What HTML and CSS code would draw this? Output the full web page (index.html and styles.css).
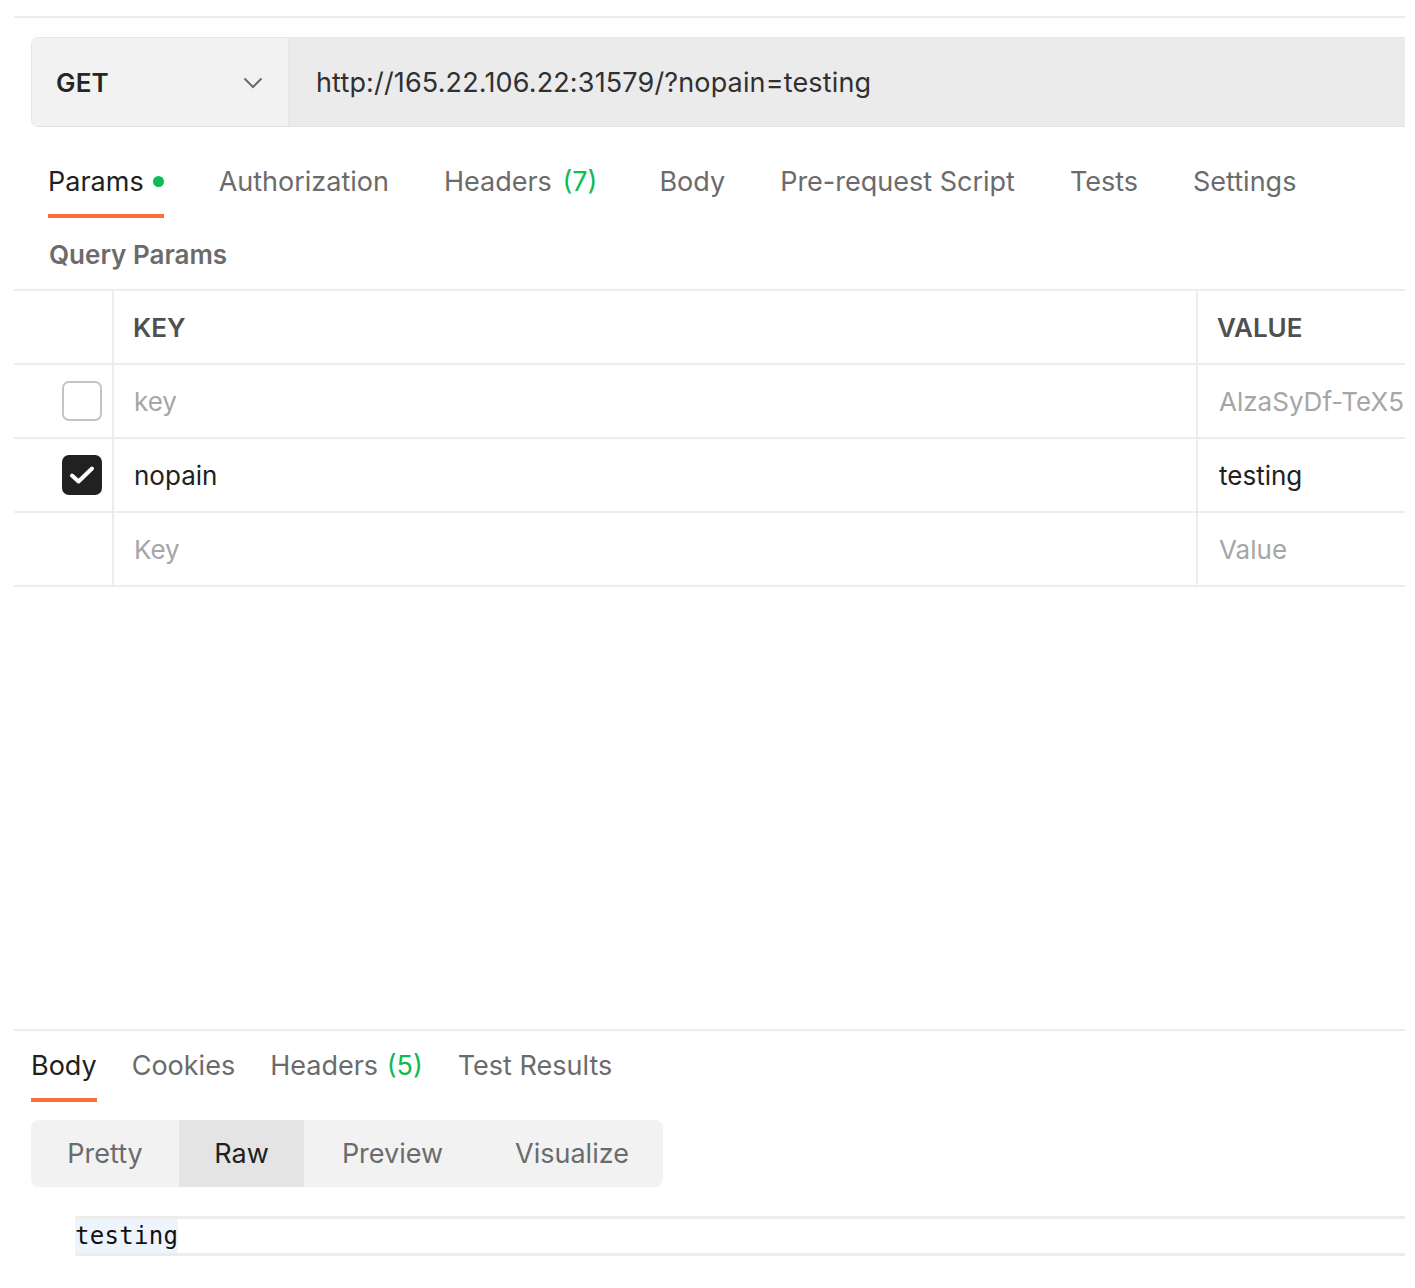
FILE: index.html
```html
<!DOCTYPE html>
<html>
<head>
<meta charset="utf-8">
<link rel="stylesheet" href="styles.css">
</head>
<body>
<div class="page">
  <div class="topline"></div>
  <div class="request">
    <div class="method">
      <span class="method-name">GET</span>
      <svg class="chev" width="20" height="12" viewBox="0 0 20 12"><path d="M1.5 1.5 L10 10 L18.5 1.5" fill="none" stroke="#6b6b6b" stroke-width="2"/></svg>
    </div>
    <div class="url">http://165.22.106.22:31579/?nopain=testing</div>
  </div>

  <div class="tabs req-tabs">
    <div class="tab active">Params<span class="dot"></span></div>
    <div class="tab">Authorization</div>
    <div class="tab wide">Headers <span class="count">(7)</span></div>
    <div class="tab">Body</div>
    <div class="tab">Pre-request Script</div>
    <div class="tab">Tests</div>
    <div class="tab">Settings</div>
  </div>

  <div class="section-title">Query Params</div>

  <div class="table">
    <div class="row head">
      <div class="c-check"></div>
      <div class="c-key">KEY</div>
      <div class="c-val">VALUE</div>
    </div>
    <div class="row">
      <div class="c-check"><span class="box"></span></div>
      <div class="c-key muted">key</div>
      <div class="c-val muted">AlzaSyDf-TeX5</div>
    </div>
    <div class="row">
      <div class="c-check"><span class="box checked"><svg width="26" height="20" viewBox="0 0 26 20"><path d="M3 10.5 L9.5 16.5 L23 3.5" fill="none" stroke="#fff" stroke-width="4" stroke-linecap="round" stroke-linejoin="round"/></svg></span></div>
      <div class="c-key">nopain</div>
      <div class="c-val">testing</div>
    </div>
    <div class="row">
      <div class="c-check"></div>
      <div class="c-key muted">Key</div>
      <div class="c-val muted">Value</div>
    </div>
  </div>

  <div class="spacer"></div>

  <div class="response">
    <div class="tabs res-tabs">
      <div class="tab active">Body</div>
      <div class="tab">Cookies</div>
      <div class="tab">Headers <span class="count">(5)</span></div>
      <div class="tab">Test Results</div>
    </div>
    <div class="segmented">
      <div class="seg">Pretty</div>
      <div class="seg selected">Raw</div>
      <div class="seg">Preview</div>
      <div class="seg">Visualize</div>
    </div>
    <div class="raw-line"><span class="raw-text">testing</span></div>
  </div>
</div>
</body>
</html>
```

FILE: styles.css
```css
html, body {
  margin: 0;
  padding: 0;
  background: #ffffff;
}
body {
  font-family: Inter, "Noto Sans", "Liberation Sans", sans-serif;
  color: #212121;
}
.page {
  padding: 0 10px 0 14px;
}
.topline {
  height: 16px;
  border-bottom: 2px solid #ededed;
}
.request {
  display: flex;
  height: 88px;
  margin: 19px 0 0 17px;
  border-radius: 7px 0 0 7px;
  overflow: hidden;
  border-top: 1px solid #e6e6e6;
  border-bottom: 1px solid #e2e2e2;
  border-left: 1px solid #e6e6e6;
}
.method {
  width: 258px;
  background: #f2f2f2;
  display: flex;
  align-items: center;
  justify-content: space-between;
  padding: 0 25px 0 24px;
  box-sizing: border-box;
  border-right: 2px solid #e6e6e6;
}
.method-name {
  font-size: 26px;
  font-weight: 600;
  color: #262626;
  letter-spacing: 0.2px;
}
.chev { margin-top: 2px; }
.url {
  flex: 1;
  background: #ebebeb;
  display: flex;
  align-items: center;
  padding-left: 26px;
  font-size: 27px;
  color: #303030;
  letter-spacing: 0.15px;
}
.tabs {
  display: flex;
}
.req-tabs {
  margin: 24px 0 0 34px;
  gap: 55px;
}
.tab {
  font-size: 27px;
  color: #6b6b6b;
  padding: 14px 0 16px;
  border-bottom: 4px solid transparent;
  display: flex;
  align-items: center;
  white-space: pre;
}
.tab.wide { margin-right: 7px; }
.tab.active {
  color: #212121;
  border-bottom-color: #ff6c37;
}
.dot {
  width: 11px;
  height: 11px;
  border-radius: 50%;
  background: #0cbb52;
  margin-left: 9px;
}
.count { color: #0cbb52; margin-left: 3px; }
.section-title {
  margin: 19px 0 0 35px;
  font-size: 26px;
  font-weight: 600;
  color: #6b6b6b;
  height: 52px;
  line-height: 36px;
}
.table {
  border-top: 2px solid #ededed;
}
.row {
  display: flex;
  height: 72px;
  border-bottom: 2px solid #ededed;
}
.c-check {
  width: 100px;
  border-right: 2px solid #ededed;
  display: flex;
  align-items: center;
  justify-content: flex-end;
  padding-right: 10px;
  box-sizing: border-box;
}
.c-key {
  width: 1084px;
  border-right: 2px solid #ededed;
  display: flex;
  align-items: center;
  padding-left: 20px;
  box-sizing: border-box;
  font-size: 26px;
  color: #212121;
}
.c-val {
  flex: 1;
  display: flex;
  align-items: center;
  padding-left: 21px;
  font-size: 26px;
  color: #212121;
  white-space: nowrap;
  overflow: hidden;
}
.head .c-key, .head .c-val {
  font-weight: 600;
  color: #505050;
  padding-left: 19px;
}
.muted { color: #a6a6a6 !important; }
.box {
  width: 36px;
  height: 36px;
  border: 2px solid #c4c4c4;
  border-radius: 7px;
  display: flex;
  align-items: center;
  justify-content: center;
}
.box.checked {
  background: #212121;
  border-color: #212121;
}
.spacer { height: 442px; }
.response {
  border-top: 2px solid #ededed;
  padding-left: 17px;
}
.res-tabs {
  gap: 35px;
  margin-top: 10px;
}
.res-tabs .tab {
  padding: 8px 0 16px;
}
.res-tabs .count { margin-left: 1px; }
.segmented {
  display: flex;
  width: 632px;
  height: 67px;
  margin-top: 18px;
  background: #f2f2f2;
  border-radius: 8px;
  overflow: hidden;
}
.seg {
  display: flex;
  align-items: center;
  justify-content: center;
  font-size: 27px;
  color: #6b6b6b;
}
.seg:nth-child(1) { width: 148px; }
.seg:nth-child(2) { width: 125px; }
.seg:nth-child(3) { width: 177px; }
.seg:nth-child(4) { width: 182px; }
.seg.selected {
  background: #e4e4e4;
  color: #212121;
}
.raw-line {
  margin: 29px 0 0 44px;
  height: 34px;
  border-top: 3px solid #ececec;
  border-bottom: 3px solid #ececec;
  display: flex;
  align-items: center;
}
.raw-text {
  font-family: "DejaVu Sans Mono", "Liberation Mono", monospace;
  font-size: 24px;
  color: #111;
  background: #eef4fd;
  height: 100%;
  display: flex;
  align-items: center;
  letter-spacing: 0.3px;
}
```
